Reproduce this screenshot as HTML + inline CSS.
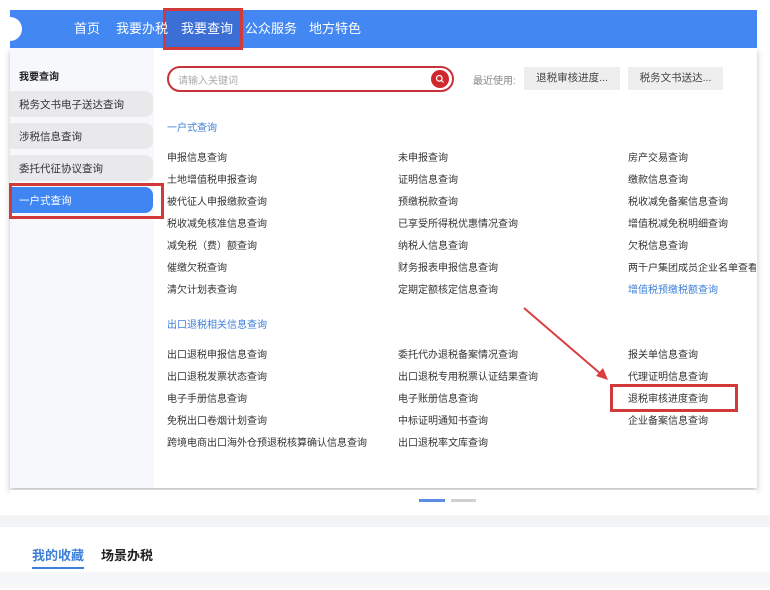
<!DOCTYPE html>
<html><head><meta charset="utf-8">
<style>
*{margin:0;padding:0;box-sizing:border-box}
body{width:770px;height:588px;background:#fff;font-family:"Liberation Sans","Noto Sans CJK SC",sans-serif;position:relative;overflow:hidden;color:#333}
.abs{position:absolute;white-space:nowrap}
.nav{left:10px;top:10px;width:747px;height:38px;background:#4287f2}
.navt{color:#fff;font-size:13px;top:18px}
.it{font-size:10px;color:#333;position:absolute;white-space:nowrap;line-height:12px}
.side{left:10px;top:48px;width:144px;height:440px;background:#f6f8fb}
.pill{left:10px;width:143px;height:26px;background:#e9e9ec;border-radius:0 8px 8px 0;font-size:10.5px;color:#333;padding:6px 0 0 9px}
.chip{top:67px;height:23px;background:#eeeeee;font-size:10.5px;color:#444;text-align:center;line-height:23px}
.red{border:3px solid #d23a3a}
.g{position:absolute;left:0;top:2px;width:770px;height:588px}
</style></head><body>
<div class="abs" style="left:10px;top:48px;width:747px;height:440px;background:#fff;box-shadow:0 3px 6px rgba(0,0,0,.25)"></div>
<div class="abs nav"></div>
<div class="abs" style="left:-8px;top:17px;width:30px;height:24px;border-radius:12px;background:#fff"></div>
<div class="abs" style="left:165px;top:10px;width:76px;height:38px;background:#3b6fd6"></div>
<div class="abs red" style="left:163px;top:8px;width:80px;height:42px"></div>
<div class="abs navt" style="left:74px">首页</div>
<div class="abs navt" style="left:116px">我要办税</div>
<div class="abs navt" style="left:181px">我要查询</div>
<div class="abs navt" style="left:245px">公众服务</div>
<div class="abs navt" style="left:309px">地方特色</div>

<div class="abs side"></div>
<div class="abs" style="left:19px;top:68px;font-size:10px;font-weight:bold;color:#222">我要查询</div>
<div class="abs pill" style="top:91px">税务文书电子送达查询</div>
<div class="abs pill" style="top:123px">涉税信息查询</div>
<div class="abs pill" style="top:155px">委托代征协议查询</div>
<div class="abs pill" style="top:187px;background:#3f86f3;color:#fff">一户式查询</div>
<div class="abs red" style="left:9px;top:183px;width:155px;height:36px"></div>

<div class="abs" style="left:167px;top:66px;width:287px;height:26px;border:2px solid #c8323a;border-radius:13px;background:#fff"></div>
<div class="abs" style="left:178px;top:72px;font-size:10px;color:#aaa">请输入关键词</div>
<div class="abs" style="left:431px;top:70px;width:18px;height:18px;border-radius:50%;background:#d0262e"></div>
<svg class="abs" style="left:435px;top:74px" width="10" height="10" viewBox="0 0 10 10"><circle cx="4.3" cy="4.3" r="2.8" fill="none" stroke="#fff" stroke-width="1.2"/><path d="M6.3 6.3L8.5 8.5" stroke="#fff" stroke-width="1.2"/></svg>
<div class="abs" style="left:473px;top:72px;font-size:10px;color:#888">最近使用:</div>
<div class="abs chip" style="left:524px;width:96px">退税审核进度...</div>
<div class="abs chip" style="left:628px;width:95px">税务文书送达...</div>

<div class="g">
<div class="it" style="left:167px;top:121px;color:#3d7fd9">一户式查询</div>
<div class="it" style="left:167px;top:151px">申报信息查询</div>
<div class="it" style="left:167px;top:173px">土地增值税申报查询</div>
<div class="it" style="left:167px;top:195px">被代征人申报缴款查询</div>
<div class="it" style="left:167px;top:217px">税收减免核准信息查询</div>
<div class="it" style="left:167px;top:239px">减免税（费）额查询</div>
<div class="it" style="left:167px;top:261px">催缴欠税查询</div>
<div class="it" style="left:167px;top:283px">清欠计划表查询</div>
<div class="it" style="left:398px;top:151px">未申报查询</div>
<div class="it" style="left:398px;top:173px">证明信息查询</div>
<div class="it" style="left:398px;top:195px">预缴税款查询</div>
<div class="it" style="left:398px;top:217px">已享受所得税优惠情况查询</div>
<div class="it" style="left:398px;top:239px">纳税人信息查询</div>
<div class="it" style="left:398px;top:261px">财务报表申报信息查询</div>
<div class="it" style="left:398px;top:283px">定期定额核定信息查询</div>
<div class="it" style="left:628px;top:151px">房产交易查询</div>
<div class="it" style="left:628px;top:173px">缴款信息查询</div>
<div class="it" style="left:628px;top:195px">税收减免备案信息查询</div>
<div class="it" style="left:628px;top:217px">增值税减免税明细查询</div>
<div class="it" style="left:628px;top:239px">欠税信息查询</div>
<div class="it" style="left:628px;top:261px;width:128px;overflow:hidden">两千户集团成员企业名单查看</div>
<div class="it" style="left:628px;top:283px;color:#3d7fd9">增值税预缴税额查询</div>

<div class="it" style="left:167px;top:318px;color:#3d7fd9">出口退税相关信息查询</div>
<div class="it" style="left:167px;top:348px">出口退税申报信息查询</div>
<div class="it" style="left:167px;top:370px">出口退税发票状态查询</div>
<div class="it" style="left:167px;top:392px">电子手册信息查询</div>
<div class="it" style="left:167px;top:414px">免税出口卷烟计划查询</div>
<div class="it" style="left:167px;top:436px">跨境电商出口海外仓预退税核算确认信息查询</div>
<div class="it" style="left:398px;top:348px">委托代办退税备案情况查询</div>
<div class="it" style="left:398px;top:370px">出口退税专用税票认证结果查询</div>
<div class="it" style="left:398px;top:392px">电子账册信息查询</div>
<div class="it" style="left:398px;top:414px">中标证明通知书查询</div>
<div class="it" style="left:398px;top:436px">出口退税率文库查询</div>
<div class="it" style="left:628px;top:348px">报关单信息查询</div>
<div class="it" style="left:628px;top:370px">代理证明信息查询</div>
<div class="it" style="left:628px;top:392px">退税审核进度查询</div>
<div class="it" style="left:628px;top:414px">企业备案信息查询</div>
</div>
<div class="abs red" style="left:610px;top:384px;width:128px;height:28px"></div>
<svg class="abs" style="left:520px;top:305px" width="95" height="80" viewBox="0 0 95 80"><path d="M4 3L82 70" stroke="#d8403f" stroke-width="2"/><path d="M88 75L76 71L83 63Z" fill="#d8403f"/></svg>

<div class="abs" style="left:10px;top:490px;width:747px;height:25px;background:#fff"></div>
<div class="abs" style="left:419px;top:499px;width:26px;height:3px;background:#5a8ee0"></div>
<div class="abs" style="left:451px;top:499px;width:25px;height:3px;background:#d0d0d0"></div>
<div class="abs" style="left:0;top:515px;width:770px;height:12px;background:#f3f4f6"></div>
<div class="abs" style="left:32px;top:545px;font-size:13px;font-weight:bold;color:#3d7fd9">我的收藏</div>
<div class="abs" style="left:32px;top:567px;width:52px;height:2px;background:#3d7fd9"></div>
<div class="abs" style="left:101px;top:545px;font-size:13px;font-weight:bold;color:#222">场景办税</div>
<div class="abs" style="left:0;top:572px;width:770px;height:16px;background:#f6f7f9"></div>
</body></html>
